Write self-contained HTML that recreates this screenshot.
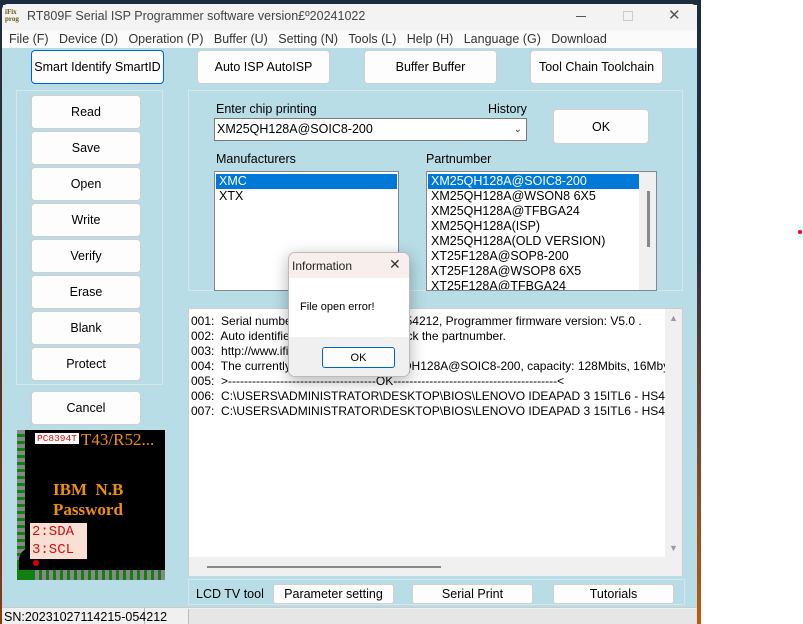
<!DOCTYPE html>
<html><head><meta charset="utf-8"><style>
*{box-sizing:border-box;margin:0;padding:0}
body{width:803px;height:624px;position:relative;background:#fff;font-family:"Liberation Sans",sans-serif;font-size:12px;color:#000;overflow:hidden}
.a{position:absolute}
.btn{position:absolute;background:#fdfdfd;border:1px solid #d0d0d0;border-radius:4px;display:flex;align-items:center;justify-content:center;font-size:12.5px}
.t{position:absolute;white-space:nowrap}
.list{position:absolute;background:#fff;border:1px solid #828790}
.list div{height:15px;line-height:15px;padding-left:3px;font-size:12.5px;white-space:nowrap}
.sel{background:#0078d7;color:#fff}
.grp{position:absolute;border:1px solid #d6e6ea}
</style></head><body>
<div class="a" style="left:0;top:0;width:701px;height:5px;background:#1c2c3c"></div>
<div class="a" style="left:0;top:0;width:3px;height:624px;background:linear-gradient(#1c2c3c,#5a3020 60%,#8a3a10)"></div>
<div class="a" style="left:697px;top:0;width:4px;height:624px;background:linear-gradient(#1c2c3c,#2a3344 40%,#c05a10)"></div>
<div class="a" style="left:798px;top:230px;width:4px;height:4px;background:#e00;border-radius:2px"></div>
<!-- window -->
<div class="a" style="left:2px;top:4px;width:695px;height:620px;background:#b8dde6;border-radius:6px 6px 0 0;overflow:hidden">
 <div class="a" style="left:0;top:0;width:695px;height:26px;background:#f3f3f3"></div>
 <div class="a" style="left:0;top:26px;width:695px;height:18px;background:#fbfbfb"></div>
</div>
<div class="t" style="left:5px;top:9px;font-family:'Liberation Serif',serif;font-size:7px;line-height:7px;color:#6a5a10;font-weight:bold">iFix<br>prog</div>
<div class="t" style="left:27px;top:9px;font-size:12.5px;color:#444">RT809F Serial ISP Programmer software version£º20241022</div>
<div class="a" style="left:576px;top:16px;width:10px;height:1px;background:#555"></div>
<div class="a" style="left:623px;top:11px;width:10px;height:10px;border:1px solid #ccc"></div>
<div class="t" style="left:668px;top:6px;font-size:15px;color:#555">✕</div>
<div class="t" style="left:9px;top:32px;font-size:12.5px;color:#333;word-spacing:0">File (F)&nbsp;&nbsp;&nbsp;Device (D)&nbsp;&nbsp;&nbsp;Operation (P)&nbsp;&nbsp;&nbsp;Buffer (U)&nbsp;&nbsp;&nbsp;Setting (N)&nbsp;&nbsp;&nbsp;Tools (L)&nbsp;&nbsp;&nbsp;Help (H)&nbsp;&nbsp;&nbsp;Language (G)&nbsp;&nbsp;&nbsp;Download</div>
<!-- top buttons -->
<div class="btn" style="left:31px;top:50px;width:133px;height:34px;border:1px solid #0067c0">Smart Identify SmartID</div>
<div class="btn" style="left:197px;top:50px;width:133px;height:34px">Auto ISP AutoISP</div>
<div class="btn" style="left:364px;top:50px;width:133px;height:34px">Buffer Buffer</div>
<div class="btn" style="left:530px;top:50px;width:133px;height:34px">Tool Chain Toolchain</div>
<!-- left group -->
<div class="grp" style="left:16px;top:90px;width:147px;height:295px"></div>
<div class="btn" style="left:31px;top:95px;width:110px;height:34px">Read</div>
<div class="btn" style="left:31px;top:131px;width:110px;height:34px">Save</div>
<div class="btn" style="left:31px;top:167px;width:110px;height:34px">Open</div>
<div class="btn" style="left:31px;top:203px;width:110px;height:34px">Write</div>
<div class="btn" style="left:31px;top:239px;width:110px;height:34px">Verify</div>
<div class="btn" style="left:31px;top:275px;width:110px;height:34px">Erase</div>
<div class="btn" style="left:31px;top:311px;width:110px;height:34px">Blank</div>
<div class="btn" style="left:31px;top:347px;width:110px;height:34px">Protect</div>
<div class="btn" style="left:31px;top:391px;width:110px;height:34px">Cancel</div>
<!-- image -->
<div class="a" style="left:17px;top:430px;width:148px;height:150px;background:#000;overflow:hidden">
 <div class="a" style="left:0;top:0;width:8px;height:130px;background:repeating-linear-gradient(#888 0 4px,#108010 4px 7px)"></div>
 <div class="a" style="left:0;top:130px;width:148px;height:20px;background:#108010"></div>
 <div class="a" style="left:18px;top:140px;width:130px;height:10px;background:repeating-linear-gradient(90deg,#888 0 4px,#108010 4px 7px)"></div>
 <div class="a" style="left:2px;top:118px;width:150px;height:22px;border-top-left-radius:12px;background:#000"></div>
 <div class="a" style="left:16px;top:130px;width:6px;height:6px;border-radius:3px;background:#d00"></div>
 <div class="t" style="left:18px;top:3px;background:#fff;color:#e00;font-family:'Liberation Mono',monospace;font-size:9.5px;padding:0 2px">PC8394T</div>
 <div class="t" style="left:64px;top:0px;color:#f0900a;font-family:'Liberation Serif',serif;font-size:17px">T43/R52...</div>
 <div class="t" style="left:36px;top:50px;color:#f0900a;font-family:'Liberation Serif',serif;font-size:17px;font-weight:bold">IBM&nbsp; N.B</div>
 <div class="t" style="left:36px;top:70px;color:#f0900a;font-family:'Liberation Serif',serif;font-size:17px;font-weight:bold">Password</div>
 <div class="a" style="left:13px;top:93px;width:57px;height:36px;background:#fae0d4;color:#d01010;font-family:'Liberation Mono',monospace;font-size:14px;line-height:18px;padding-left:2px">2:SDA<br>3:SCL</div>
</div>
<!-- chip panel -->
<div class="grp" style="left:188px;top:90px;width:495px;height:201px"></div>
<div class="t" style="left:216px;top:102px;font-size:12.5px">Enter chip printing</div>
<div class="t" style="left:488px;top:102px;font-size:12.5px">History</div>
<div class="a" style="left:214px;top:118px;width:313px;height:23px;background:#fff;border:1px solid #7a7a7a;font-size:12.5px;line-height:21px;padding-left:2px">XM25QH128A@SOIC8-200<span style="position:absolute;right:4px;top:0;font-size:10px;color:#444">&#8964;</span></div>
<div class="btn" style="left:553px;top:109px;width:96px;height:35px">OK</div>
<div class="t" style="left:216px;top:152px;font-size:12.5px">Manufacturers</div>
<div class="t" style="left:426px;top:152px;font-size:12.5px">Partnumber</div>
<div class="list" style="left:214px;top:171px;width:185px;height:120px;padding:2px 1px">
 <div class="sel">XMC</div><div>XTX</div></div>
<div class="list" style="left:426px;top:171px;width:231px;height:120px;padding:2px 1px;overflow:hidden">
 <div class="sel" style="width:211px">XM25QH128A@SOIC8-200</div><div>XM25QH128A@WSON8 6X5</div><div>XM25QH128A@TFBGA24</div><div>XM25QH128A(ISP)</div><div>XM25QH128A(OLD VERSION)</div><div>XT25F128A@SOP8-200</div><div>XT25F128A@WSOP8 6X5</div><div>XT25F128A@TFBGA24</div>
 <div class="a" style="left:212px;top:0;width:17px;height:118px;background:#f0f0f0"></div>
 <div class="a" style="left:220px;top:19px;width:2px;height:56px;background:#888"></div>
</div>
<!-- log -->
<div class="a" style="left:188px;top:308px;width:495px;height:268px;background:#fff;border:1px solid #ccc">
 <div class="a" style="left:0;top:248px;width:493px;height:19px;background:#f0f0f0"></div>
 <div class="a" style="left:18px;top:257px;width:234px;height:2px;background:#888"></div>
 <div class="a" style="left:476px;top:0;width:17px;height:248px;background:#f0f0f0"></div>
 <div class="t" style="left:480px;top:4px;font-size:9px;color:#999">▲</div>
 <div class="t" style="left:480px;top:234px;font-size:9px;color:#999">▼</div>
 <div class="a" style="left:2px;top:5px;width:474px;overflow:hidden;font-size:12px;line-height:15px;white-space:pre">001:  Serial number: 20231027114215-054212, Programmer firmware version: V5.0 .
002:  Auto identified the partnumber, check the partnumber.
003:  http://www.ifixprog.com/list-3.html
004:  The currently selected chip: XM25QH128A@SOIC8-200, capacity: 128Mbits, 16Mbytes.
005:  >-------------------------------------OK-----------------------------------------<
006:  C:\USERS\ADMINISTRATOR\DESKTOP\BIOS\LENOVO IDEAPAD 3 15ITL6 - HS46
007:  C:\USERS\ADMINISTRATOR\DESKTOP\BIOS\LENOVO IDEAPAD 3 15ITL6 - HS46</div>
</div>
<!-- bottom row -->
<div class="grp" style="left:188px;top:579px;width:497px;height:26px"></div>
<div class="t" style="left:196px;top:587px;font-size:12.5px">LCD TV tool</div>
<div class="btn" style="left:273px;top:584px;width:121px;height:20px;border-radius:3px">Parameter setting</div>
<div class="btn" style="left:412px;top:584px;width:121px;height:20px;border-radius:3px">Serial Print</div>
<div class="btn" style="left:553px;top:584px;width:121px;height:20px;border-radius:3px">Tutorials</div>
<!-- status -->
<div class="a" style="left:2px;top:607px;width:695px;height:17px;background:#f0f0f0;border-top:1px solid #ccc"></div>
<div class="a" style="left:188px;top:609px;width:509px;height:15px;background:#e6e6e6;border-left:1px solid #bbb"></div>
<div class="a" style="left:144px;top:608px;width:44px;height:16px;border-left:1px solid #bbb"></div>
<div class="t" style="left:4px;top:610px;font-size:12.5px">SN:20231027114215-054212</div>
<!-- dialog -->
<div class="a" style="left:288px;top:252px;width:122px;height:125px;background:#fff;border:1px solid #bbb;border-radius:7px;overflow:hidden;box-shadow:0 4px 16px rgba(0,0,0,.3)">
 <div class="a" style="left:0;top:0;width:122px;height:25px;background:#f8efec"></div>
 <div class="t" style="left:3px;top:6px;font-size:12px;color:#222">Information</div>
 <div class="t" style="left:100px;top:3px;font-size:14px;color:#333;font-weight:lighter">✕</div>
 <div class="t" style="left:11px;top:48px;font-size:11px">File open error!</div>
 <div class="a" style="left:0;top:84px;width:122px;height:41px;background:#f0f0f0"></div>
 <div class="btn" style="left:33px;top:94px;width:73px;height:21px;border:1px solid #0067c0;border-radius:3px;font-size:11px">OK</div>
</div>
</body></html>
